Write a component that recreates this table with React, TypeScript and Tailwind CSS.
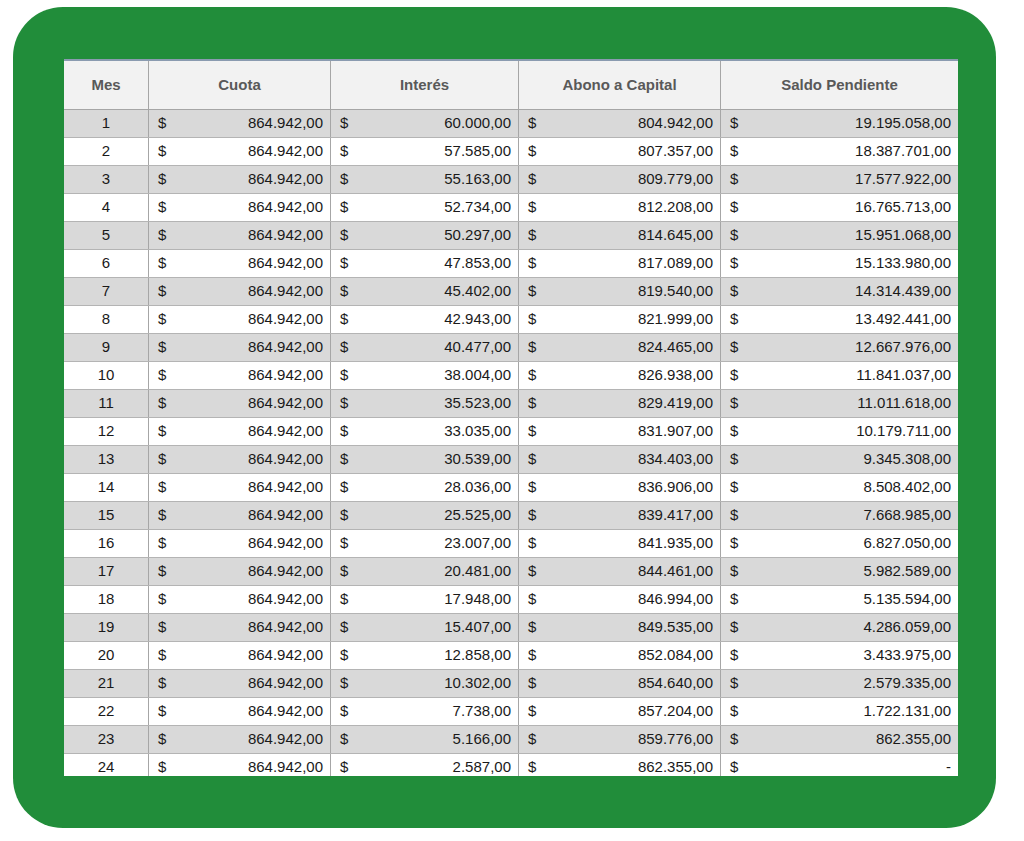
const rows: [number, string, string, string, string][] = [
  [1, '864.942,00', '60.000,00', '804.942,00', '19.195.058,00'],
  [2, '864.942,00', '57.585,00', '807.357,00', '18.387.701,00'],
  [3, '864.942,00', '55.163,00', '809.779,00', '17.577.922,00'],
  [4, '864.942,00', '52.734,00', '812.208,00', '16.765.713,00'],
  [5, '864.942,00', '50.297,00', '814.645,00', '15.951.068,00'],
  [6, '864.942,00', '47.853,00', '817.089,00', '15.133.980,00'],
  [7, '864.942,00', '45.402,00', '819.540,00', '14.314.439,00'],
  [8, '864.942,00', '42.943,00', '821.999,00', '13.492.441,00'],
  [9, '864.942,00', '40.477,00', '824.465,00', '12.667.976,00'],
  [10, '864.942,00', '38.004,00', '826.938,00', '11.841.037,00'],
  [11, '864.942,00', '35.523,00', '829.419,00', '11.011.618,00'],
  [12, '864.942,00', '33.035,00', '831.907,00', '10.179.711,00'],
  [13, '864.942,00', '30.539,00', '834.403,00', '9.345.308,00'],
  [14, '864.942,00', '28.036,00', '836.906,00', '8.508.402,00'],
  [15, '864.942,00', '25.525,00', '839.417,00', '7.668.985,00'],
  [16, '864.942,00', '23.007,00', '841.935,00', '6.827.050,00'],
  [17, '864.942,00', '20.481,00', '844.461,00', '5.982.589,00'],
  [18, '864.942,00', '17.948,00', '846.994,00', '5.135.594,00'],
  [19, '864.942,00', '15.407,00', '849.535,00', '4.286.059,00'],
  [20, '864.942,00', '12.858,00', '852.084,00', '3.433.975,00'],
  [21, '864.942,00', '10.302,00', '854.640,00', '2.579.335,00'],
  [22, '864.942,00', '7.738,00', '857.204,00', '1.722.131,00'],
  [23, '864.942,00', '5.166,00', '859.776,00', '862.355,00'],
  [24, '864.942,00', '2.587,00', '862.355,00', '-'],
];

const COLS = 'grid grid-cols-[85px_182px_188px_202px_237px]';

function Money({ value, last }: { value: string; last?: boolean }) {
  return (
    <div className={`flex items-center justify-between pl-[9px] pr-[7px] ${last ? '' : 'border-r border-[#a6a6a6]'}`}>
      <span>$</span>
      <span>{value}</span>
    </div>
  );
}

export default function App() {
  return (
    <div className="w-[1024px] h-[841px] bg-white pt-[7px] pl-[13px]" style={{ fontFamily: '"Liberation Sans", Arial, sans-serif' }}>
      <div className="w-[983px] h-[821px] rounded-[50px] bg-[#218d3a] pt-[52px] pl-[51px]">
        <div className="w-[894px] h-[717px] overflow-hidden border-t-2 border-[#8a9bb0] text-[15px] text-[#1a1a1a]">
          {/* header */}
          <div className={`${COLS} h-[49px] bg-[#f2f2f2] border-b border-[#a6a6a6] font-bold text-[#595959]`}>
            <div className="flex items-center justify-center border-r border-[#a6a6a6]">Mes</div>
            <div className="flex items-center justify-center border-r border-[#a6a6a6]">Cuota</div>
            <div className="flex items-center justify-center border-r border-[#a6a6a6]">Interés</div>
            <div className="flex items-center justify-center border-r border-[#a6a6a6]">Abono a Capital</div>
            <div className="flex items-center justify-center">Saldo Pendiente</div>
          </div>
          {rows.map(([mes, cuota, interes, abono, saldo]) => (
            <div
              key={mes}
              className={`${COLS} h-[28px] border-b border-[#b4b4b4] ${mes % 2 === 1 ? 'bg-[#d9d9d9]' : 'bg-white'}`}
            >
              <div className="flex items-center justify-center border-r border-[#a6a6a6]">{mes}</div>
              <Money value={cuota} />
              <Money value={interes} />
              <Money value={abono} />
              <Money value={saldo} last />
            </div>
          ))}
        </div>
      </div>
    </div>
  );
}
